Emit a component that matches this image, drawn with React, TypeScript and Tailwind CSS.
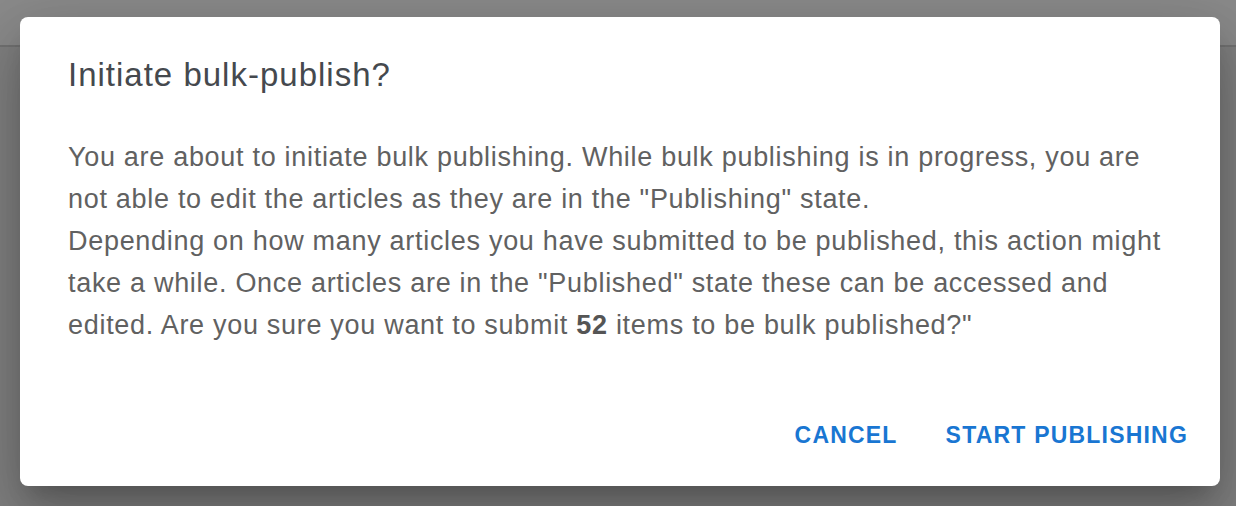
import React from 'react';

const font = { fontFamily: '"Liberation Sans", Arial, Helvetica, sans-serif' };

const BulkPublishDialog: React.FC<{ count: number }> = ({ count }) => {
  return (
    <div
      className="flex w-full flex-col rounded-[8px] bg-white shadow-[0_16px_22px_-10px_rgba(0,0,0,0.2),0_36px_56px_4px_rgba(0,0,0,0.14),0_14px_68px_12px_rgba(0,0,0,0.12)]"
      style={font}
    >
      {/* Title */}
      <h2 className="px-12 pt-[40px] text-[33px] leading-[36px] font-normal tracking-[1px] text-[#45494e]">
        Initiate bulk-publish?
      </h2>

      {/* Content */}
      <div className="mt-[43px] px-12 text-[27px] leading-[42px] tracking-[0.7px] text-[#616161]">
        <p>
          You are about to initiate bulk publishing. While bulk publishing is in progress, you are not able to edit
          the articles as they are in the "Publishing" state.
        </p>
        <p>
          Depending on how many articles you have submitted to be published, this action might take a while. Once
          articles are in the "Published" state these can be accessed and edited. Are you sure you want to submit{' '}
          <b className="font-bold text-[#555]">{count}</b> items to be bulk published?"
        </p>
      </div>

      {/* Actions */}
      <div className="mt-[63px] flex justify-end gap-[24px] pr-[20px] pb-[25px]">
        <button className="rounded px-3 py-2 text-[23px] leading-[36px] font-bold tracking-[1.2px] text-[#1976d2] uppercase hover:bg-blue-50">
          Cancel
        </button>
        <button className="rounded px-3 py-2 text-[23px] leading-[36px] font-bold tracking-[1.2px] text-[#1976d2] uppercase hover:bg-blue-50">
          Start publishing
        </button>
      </div>
    </div>
  );
};

export default function App() {
  return (
    <div className="relative h-[506px] w-full overflow-hidden bg-[#808080]">
      {/* page underneath, dimmed by the backdrop */}
      <div className="h-[47px] border-b-2 border-[#727272] bg-[#8a8a8a]" />

      {/* modal layer */}
      <div className="absolute inset-0 flex items-start pt-[17px] pr-4 pl-5">
        <BulkPublishDialog count={52} />
      </div>
    </div>
  );
}
